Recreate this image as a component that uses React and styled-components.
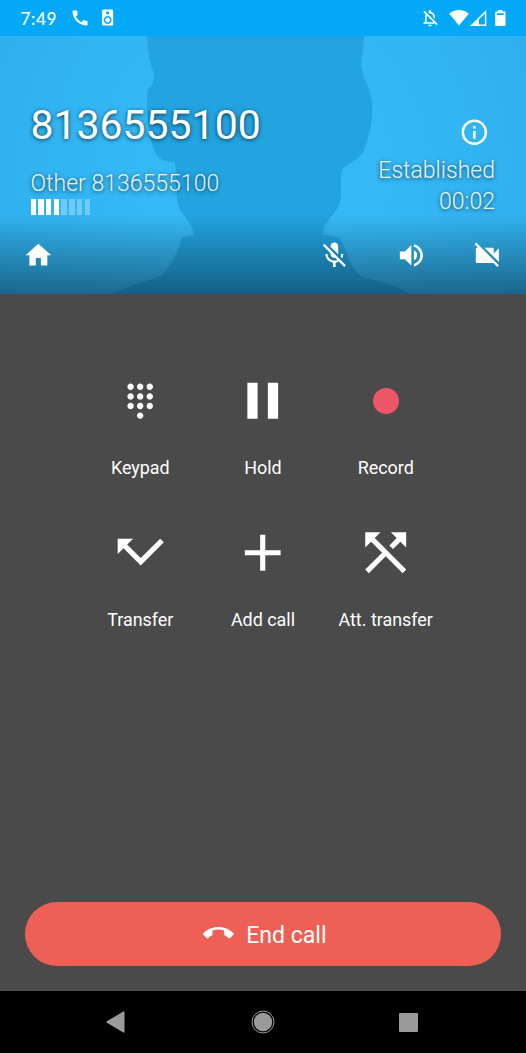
import React from 'react';
import styled, { createGlobalStyle } from 'styled-components';
import {
  MdAdd,
  MdCall,
  MdCallEnd,
  MdDialpad,
  MdInfoOutline,
  MdMicOff,
  MdOutlineNotificationsOff,
  MdPause,
  MdSpeaker,
  MdVideocamOff,
  MdVolumeUp,
} from 'react-icons/md';

const LEVELS = [true, true, true, true, false, false, false, false];

const HomeIcon = () => (
  <svg width='30.72' height='30.72' viewBox='0 0 24 24'>
    <path fill='currentColor' d='M10 20v-6h4v6h5v-8h3L12 3 2 12h3v8z' />
  </svg>
);

const WifiIcon = () => (
  <svg width='20' height='16' viewBox='0 0 20 16'>
    <path fill='#fff' d='M.3 3.8C2.9 1.4 6.2.1 10 .1s7.100 1.300 9.700 3.700L10 15.600z' />
  </svg>
);

const SignalIcon = () => (
  <svg width='17' height='16' viewBox='0 0 17 16'>
    <path fill='#fff' fillRule='evenodd' d='M16.300 0v16H0zM14.900 3.400L9 9.300v5.300h5.900z' />
  </svg>
);

const BatteryIcon = () => (
  <svg width='11' height='16' viewBox='0 0 11 16'>
    <path
      fill='#fff'
      fillRule='evenodd'
      d='M3.300 0h4v1.600h2.300q.9 0 .9.900v12.600q0 .9-.9.900H1.100q-.9 0-.9-.9V2.500q0-.9.9-.9h2.200zM1.900 3.300v1.700h6.900V3.300z'
    />
  </svg>
);

const TransferIcon = () => (
  <svg width='61.44' height='61.44' viewBox='0 0 24 24'>
    <path fill='#fff' d='M3 6.500h6L6.700 8.800l5.300 5.300 7.600-7.600L21 7.950l-9 9-6.700-6.700L3 12.500z' />
  </svg>
);

const AttTransferIcon = () => (
  <svg width='61.44' height='61.44' viewBox='0 0 24 24'>
    <path
      fill='#fff'
      d='M10 4H4v6l2.290-2.290 4.300 4.300L4 18.600 5.400 20l6.600-6.590L18.600 20 20 18.600 7.710 6.290zM14 4l2.290 2.290-2.850 2.850 1.420 1.420 2.850-2.850L20 10V4z'
    />
  </svg>
);

const RecordIcon = () => (
  <svg width='26' height='26' viewBox='0 0 26 26'>
    <circle cx='13' cy='13' r='13' fill='#ee5566' />
  </svg>
);

const ACTIONS = [
  { label: 'Keypad', icon: <MdDialpad size={38.4} /> },
  { label: 'Hold', icon: <MdPause size={61.44} /> },
  { label: 'Record', icon: <RecordIcon /> },
  { label: 'Transfer', icon: <TransferIcon /> },
  { label: 'Add call', icon: <MdAdd size={61.44} /> },
  { label: 'Att. transfer', icon: <AttTransferIcon /> },
];

const Silhouette = () => (
  <Backdrop viewBox='0 36 526 258' preserveAspectRatio='none'>
    <path
      fill='#22a4e1'
      stroke='#1f9fdb'
      strokeOpacity='.5'
      d='M147.500 35C148 52 150 62 153 70C155 76 155 79 152 85C148 90 147.500 92 147.500 98C147 120 150 136 154 149
        C157 157 162 161 168 161L175 161.500C177 176 176 196 179 207C182 216 191 219 194.500 235
        C190 237 185 236 182 238C179 250 170 269 160 277C145 281 126 288 110 295
        H412C395 286 377 280 363 278C351 272 346 250 340 238C334 236 328 236 323 235C321 221 338 215 340 200
        C341 190 340 181 341 173C343 163 358 162 363 151C368 139 372 124 372 107C371 86 362 80 361 65
        C361 54 364 47 364 35Z'
    />
  </Backdrop>
);

const App = () => (
  <Screen>
    <GlobalStyle />
    <StatusBar>
      <Clock>7:49</Clock>
      <StatusLeft>
        <MdCall size={20} />
        <MdSpeaker size={19.2} />
      </StatusLeft>
      <StatusRight>
        <MdOutlineNotificationsOff size={20} />
        <WifiIcon />
        <SignalIcon />
        <BatteryIcon />
      </StatusRight>
    </StatusBar>
    <Header>
      <Silhouette />
      <Shade />
      <CallInfo>
        <Caller>
          <CallerNumber>8136555100</CallerNumber>
          <LightText>Other 8136555100</LightText>
          <Levels>
            {LEVELS.map((on, i) => (
              <Level key={i} $on={on} />
            ))}
          </Levels>
        </Caller>
        <CallState>
          <InfoButton aria-label='Call info'>
            <MdInfoOutline size={30.72} />
          </InfoButton>
          <LightText>Established</LightText>
          <LightText>00:02</LightText>
        </CallState>
      </CallInfo>
      <Toolbar>
        <IconButton aria-label='Home'>
          <HomeIcon />
        </IconButton>
        <ToolbarGroup>
          <IconButton aria-label='Mute'>
            <MdMicOff size={30.72} />
          </IconButton>
          <IconButton aria-label='Speaker'>
            <MdVolumeUp size={30.72} />
          </IconButton>
          <IconButton aria-label='Video'>
            <MdVideocamOff size={30.72} />
          </IconButton>
        </ToolbarGroup>
      </Toolbar>
    </Header>
    <Body>
      <Actions>
        {ACTIONS.map(({ label, icon }) => (
          <Action key={label}>
            <ActionIcon>{icon}</ActionIcon>
            <ActionLabel>{label}</ActionLabel>
          </Action>
        ))}
      </Actions>
      <EndCall>
        <MdCallEnd size={30.72} />
        <span>End call</span>
      </EndCall>
    </Body>
    <NavBar>
      <svg width='19' height='22' viewBox='0 0 19 22'>
        <path fill='#9a9a9a' d='M17.300.500Q18.500 0 18.500 1.200v19.600q0 1.200-1.200.7L.9 11.700q-1-.7 0-1.400z' />
      </svg>
      <svg width='24' height='24' viewBox='0 0 24 24'>
        <circle cx='12' cy='12' r='9.200' fill='#9a9a9a' />
        <circle cx='12' cy='12' r='11' fill='none' stroke='#9a9a9a' />
      </svg>
      <Recents />
    </NavBar>
  </Screen>
);

const GlobalStyle = createGlobalStyle`
  body {
    margin: 0;
    background: #4a4a4a;
  }
  button {
    padding: 0;
    border: 0;
    background: none;
    color: inherit;
    font: inherit;
  }
  svg {
    display: block;
    flex-shrink: 0;
  }
`;

const Screen = styled.div`
  width: 526px;
  height: 1053px;
  display: flex;
  flex-direction: column;
  overflow: hidden;
  color: #fff;
  background: #4a4a4a;
  font-family: Roboto, 'Liberation Sans', sans-serif;
`;

const StatusBar = styled.div`
  height: 36px;
  box-sizing: border-box;
  padding: 0 20px 0 20.5px;
  display: flex;
  align-items: center;
  background: #03a9f7;
`;

const Clock = styled.div`
  width: 49px;
  padding-top: 1px;
  font-family: Lato, sans-serif;
  font-size: 17.2px;
  font-weight: 500;
  letter-spacing: 0.6px;
`;

const StatusLeft = styled.div`
  display: flex;
  align-items: center;
  gap: 8.5px;
`;

const StatusRight = styled.div`
  margin-left: auto;
  display: flex;
  align-items: center;
  gap: 1px;
  svg:first-child {
    margin-right: 8px;
  }
  svg:last-child {
    margin-left: 7px;
  }
`;

const Header = styled.header`
  position: relative;
  height: 258px;
  display: flex;
  flex-direction: column;
  background: radial-gradient(circle at 263px 130px, #35baf7 0, #34b9f6 120px, #2fb0ee 290px);
`;

const Backdrop = styled.svg`
  position: absolute;
  inset: 0;
  width: 100%;
  height: 100%;
`;

const Shade = styled.div`
  position: absolute;
  left: 0;
  right: 0;
  bottom: 0;
  height: 80px;
  background: linear-gradient(rgba(0, 0, 0, 0), rgba(0, 0, 0, 0.42));
`;

const CallInfo = styled.div`
  position: relative;
  height: 188px;
  box-sizing: border-box;
  padding: 65px 31px 0 30.5px;
  display: flex;
  justify-content: space-between;
`;

const Caller = styled.div`
  display: flex;
  flex-direction: column;
`;

const CallerNumber = styled.div`
  height: 67px;
  font-size: 40.96px;
  line-height: 48px;
  text-shadow: 0 1px 4px rgba(0, 0, 0, 0.7);
`;

const LightText = styled.div`
  color: rgba(255, 255, 255, 0.92);
  font-size: 23.04px;
  font-weight: 300;
  line-height: 31px;
  text-shadow: 0 1px 4px rgba(0, 0, 0, 0.7);
`;

const Levels = styled.div`
  display: flex;
  gap: 2.35px;
`;

const Level = styled.div`
  width: 5.4px;
  height: 16px;
  background: ${props => (props.$on ? '#fff' : 'rgba(255, 255, 255, 0.3)')};
`;

const CallState = styled.div`
  display: flex;
  flex-direction: column;
  align-items: flex-end;
  padding-top: 16px;
`;

const InfoButton = styled.button`
  height: 37.5px;
  margin-right: 5px;
  display: flex;
`;

const Toolbar = styled.div`
  position: relative;
  height: 61px;
  padding: 1px 23px 0;
  display: flex;
  align-items: center;
  justify-content: space-between;
`;

const ToolbarGroup = styled.div`
  display: flex;
  gap: 46px;
`;

const IconButton = styled.button`
  display: flex;
`;

const Body = styled.main`
  flex: 1;
  display: flex;
  flex-direction: column;
  align-items: center;
  justify-content: space-between;
  padding: 76px 25px 25px;
`;

const Actions = styled.div`
  display: grid;
  grid-template-columns: repeat(3, 122.7px);
  grid-auto-rows: 152px;
`;

const Action = styled.div`
  display: flex;
  flex-direction: column;
  align-items: center;
`;

const ActionIcon = styled.div`
  height: 61.4px;
  display: flex;
  align-items: center;
`;

const ActionLabel = styled.div`
  margin-top: 25.6px;
  font-size: 17.92px;
  line-height: 21px;
  white-space: nowrap;
`;

const EndCall = styled.button`
  width: 476px;
  height: 64px;
  box-sizing: border-box;
  padding: 2px 0 0 3.5px;
  display: flex;
  align-items: center;
  justify-content: center;
  gap: 12.5px;
  border-radius: 32px;
  background: #ee6055;
  font-size: 23.04px;
  svg {
    margin-bottom: 4px;
  }
`;

const NavBar = styled.nav`
  height: 62px;
  box-sizing: border-box;
  padding: 0 108px 0 106px;
  display: flex;
  align-items: center;
  justify-content: space-between;
  background: #000;
  svg:nth-child(2) {
    margin-left: 2px;
  }
`;

const Recents = styled.div`
  width: 19px;
  height: 19px;
  border-radius: 1px;
  background: #9a9a9a;
`;

export default App;
